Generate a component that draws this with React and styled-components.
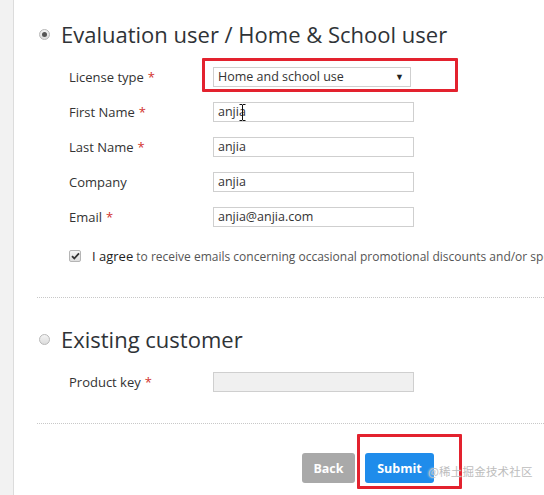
import React from 'react';
import styled, { createGlobalStyle } from 'styled-components';

const GlobalStyle = createGlobalStyle`
  html, body {
    margin: 0;
    padding: 0;
    background: #ffffff;
    overflow: hidden;
  }
  body {
    font-family: 'Open Sans', 'Noto Sans', sans-serif;
    color: #333333;
  }
`;

const Page = styled.div`
  display: flex;
  width: 544px;
  height: 495px;
  overflow: hidden;
  position: relative;
`;

const SideStrip = styled.div`
  width: 13px;
  flex-shrink: 0;
  background: #f2f2f2;
  border-right: 1px solid #dcdcdc;
`;

const Main = styled.div`
  flex: 1;
  padding: 18px 0 0 23px;
  min-width: 0;
`;

const Section = styled.section`
  padding-bottom: ${p => p.$bottom || 0}px;
  border-bottom: ${p => (p.$divider ? '1px dotted #c8c8c8' : 'none')};
`;

const SectionTitle = styled.label`
  display: flex;
  align-items: center;
  gap: 11px;
  height: 32px;
  margin-top: ${p => p.$top || 0}px;
  padding-left: 2px;
  font-size: 22px;
  font-weight: 400;
  color: #2f3337;
  white-space: nowrap;
`;

const Radio = styled.span`
  width: 11px;
  height: 11px;
  border-radius: 50%;
  border: 1px solid #b8b8b8;
  background: linear-gradient(#f4f4f4, #dcdcdc);
  box-sizing: border-box;
  display: flex;
  align-items: center;
  justify-content: center;
  flex-shrink: 0;

  &::after {
    content: '';
    width: 5px;
    height: 5px;
    border-radius: 50%;
    background: ${p => (p.$checked ? '#555' : 'transparent')};
  }
`;

const Fields = styled.div`
  display: flex;
  flex-direction: column;
  padding-left: 32px;
  margin-top: ${p => p.$top || 9}px;
`;

const Row = styled.div`
  display: flex;
  align-items: center;
  height: 35px;
`;

const Label = styled.span`
  width: 144px;
  flex-shrink: 0;
  font-size: 13px;
  color: #333;
  white-space: nowrap;
`;

const Required = styled.span`
  color: #d2322d;
  margin-left: 4px;
`;

const Input = styled.div`
  position: relative;
  width: 201px;
  height: 20px;
  box-sizing: border-box;
  border: 1px solid #cfcfcf;
  background: ${p => (p.$disabled ? '#f0f0f0' : '#fff')};
  font-size: 12.5px;
  color: #333;
  padding: 0 4px;
  display: flex;
  align-items: center;
  white-space: nowrap;
`;

const SelectWrap = styled.div`
  position: relative;
`;

const Select = styled.div`
  width: 198px;
  height: 20px;
  box-sizing: border-box;
  border: 1px solid #cfcfcf;
  background: #fff;
  font-size: 12.5px;
  color: #333;
  padding: 0 6px 0 4px;
  display: flex;
  align-items: center;
  justify-content: space-between;
`;

const Caret = styled.span`
  font-size: 9px;
  color: #222;
`;

const Highlight = styled.div`
  position: absolute;
  top: ${p => p.$t}px;
  left: ${p => p.$l}px;
  right: ${p => p.$r}px;
  bottom: ${p => p.$b}px;
  border: 3px solid #e3222e;
  border-radius: 1px;
  pointer-events: none;
`;

const Cursor = styled.svg`
  position: absolute;
  left: 25px;
  top: 1px;
`;

const AgreeRow = styled.label`
  display: flex;
  align-items: center;
  gap: 11px;
  margin-top: 13px;
  font-size: 12px;
  color: #555;
  white-space: nowrap;
`;

const Checkbox = styled.span`
  width: 12px;
  height: 12px;
  box-sizing: border-box;
  border: 1px solid #b5b5b5;
  border-radius: 2px;
  background: linear-gradient(#f6f6f6, #dedede);
  display: flex;
  align-items: center;
  justify-content: center;
  flex-shrink: 0;
`;

const Strong = styled.span`
  color: #222;
  font-size: 13px;
`;

const Actions = styled.div`
  display: flex;
  gap: 10px;
  padding-left: 265px;
  margin-top: 29px;
`;

const Button = styled.button`
  position: relative;
  width: ${p => p.$w}px;
  height: 30px;
  padding: 0;
  border: none;
  border-radius: 3px;
  background: ${p => (p.$primary ? '#1f8ceb' : '#a9a9a9')};
  color: #fff;
  font-family: 'Open Sans', sans-serif;
  font-weight: 700;
  font-size: 12.5px;
  cursor: pointer;
`;

const Watermark = styled.span`
  position: absolute;
  left: 428px;
  top: 463px;
  font-family: 'Noto Sans CJK SC', 'Noto Sans', sans-serif;
  font-size: 11.5px;
  color: #bdbdbd;
  text-shadow: 0 0 2px #fff;
  letter-spacing: 0.2px;
  white-space: nowrap;
`;

const Field = ({ label, required, value }) => (
  <Row>
    <Label>
      {label}
      {required && <Required>*</Required>}
    </Label>
    {value}
  </Row>
);

const App = () => {
  return (
    <>
      <GlobalStyle />
      <Page>
        <SideStrip />
        <Main>
          <Section $divider $bottom={32}>
            <SectionTitle>
              <Radio $checked />
              Evaluation user / Home &amp; School user
            </SectionTitle>
            <Fields>
              <Field
                label="License type"
                required
                value={
                  <SelectWrap>
                    <Select>
                      Home and school use
                      <Caret>▼</Caret>
                    </Select>
                    <Highlight $t={-9} $l={-11} $r={-47} $b={-5} />
                  </SelectWrap>
                }
              />
              <Field
                label="First Name"
                required
                value={
                  <Input>
                    anjia
                    <Cursor width="7" height="17" viewBox="0 0 7 17">
                      <path d="M0.5 0.5h2.5l0.5 0.5 0.5-0.5h2.5M3.5 1v15M0.5 16.5h2.5l0.5-0.5 0.5 0.5h2.5" fill="none" stroke="#111" strokeWidth="1" />
                    </Cursor>
                  </Input>
                }
              />
              <Field label="Last Name" required value={<Input>anjia</Input>} />
              <Field label="Company" value={<Input>anjia</Input>} />
              <Field label="Email" required value={<Input>anjia@anjia.com</Input>} />
              <AgreeRow>
                <Checkbox>
                  <svg width="9" height="8" viewBox="0 0 9 8">
                    <path d="M1 4.2l2.3 2.3L8 1.3" fill="none" stroke="#333" strokeWidth="1.8" />
                  </svg>
                </Checkbox>
                <span>
                  <Strong>I agree</Strong> to receive emails concerning occasional promotional discounts and/or special offers
                </span>
              </AgreeRow>
            </Fields>
          </Section>

          <Section $divider $bottom={24}>
            <SectionTitle $top={25}>
              <Radio />
              Existing customer
            </SectionTitle>
            <Fields $top={9}>
              <Field label="Product key" required value={<Input $disabled />} />
            </Fields>
          </Section>

          <Actions>
            <Button $w={53}>Back</Button>
            <Button $primary $w={69}>
              Submit
              <Highlight $t={-19} $l={-8} $r={-28} $b={-6} />
            </Button>
          </Actions>
        </Main>
        <Watermark>@稀土掘金技术社区</Watermark>
      </Page>
    </>
  );
};

export default App;
